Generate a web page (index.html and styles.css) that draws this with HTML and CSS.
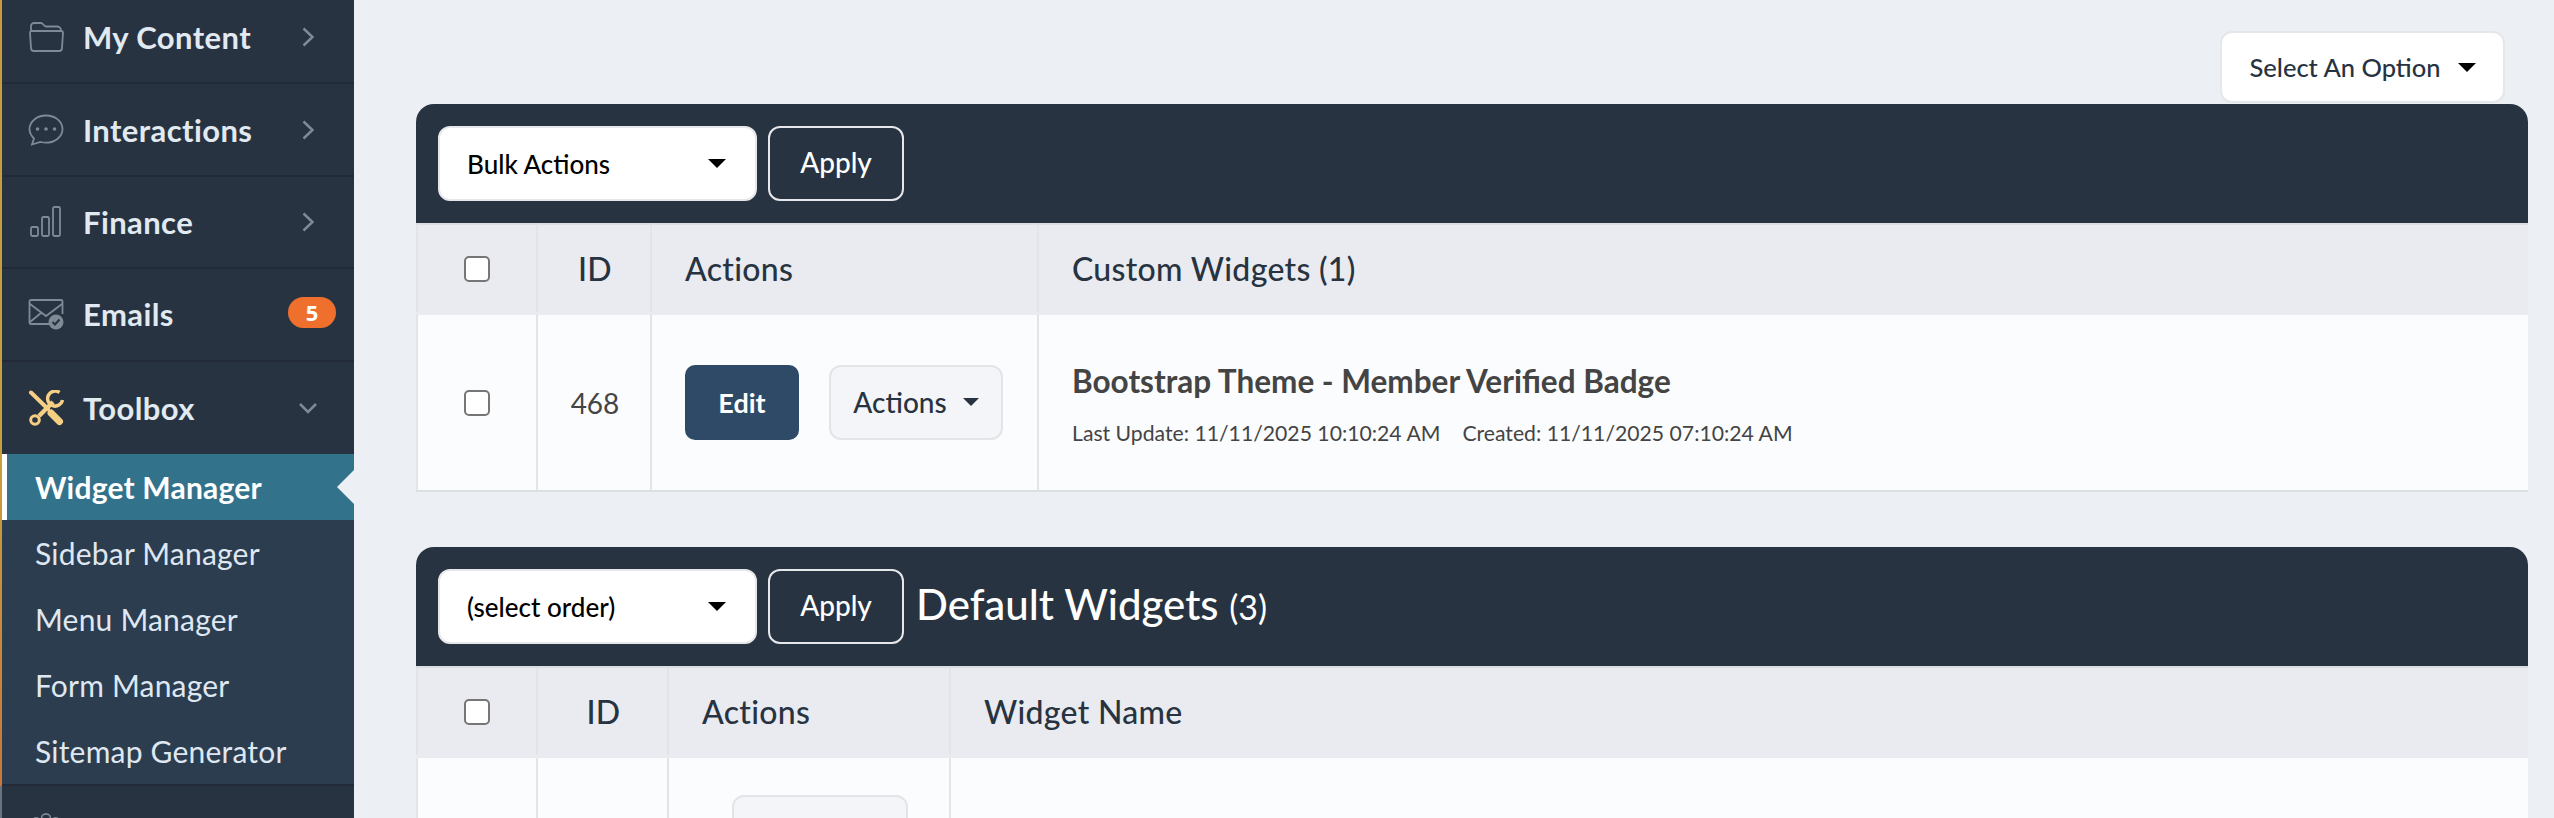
FILE: index.html
```html
<!DOCTYPE html>
<html lang="en">
<head>
<meta charset="utf-8">
<title>Widget Manager</title>
<link rel="stylesheet" href="styles.css">
</head>
<body>
<div class="page">
  <aside class="sidebar">
    <nav class="nav">
      <a class="nav-item">
        <svg class="nav-icon" viewBox="0 0 36 32"><path d="M3 10V5a3 3 0 0 1 3-3h7c2 0 3 3.500 5 3.500h11a4 4 0 0 1 4 4M3 10h30a2 2 0 0 1 2 2l-1 15a3 3 0 0 1-3 3H6a3 3 0 0 1-3-3L2 12a2 2 0 0 1 1-2z"/></svg>
        <span class="nav-label">My Content</span>
        <svg class="chev" viewBox="0 0 12 20"><path d="M1.500 1.500L10.500 10l-9 8.500"/></svg>
      </a>
      <a class="nav-item">
        <svg class="nav-icon" viewBox="0 0 36 32"><path d="M18 1.500C9 1.500 1.500 7.500 1.500 15c0 4 2 7 4.500 9.500L4 30.500l8.500-2.500c2 .5 3.500 .7 5.500 .7 9 0 16.500-6 16.500-13.700S27 1.500 18 1.500z"/><circle class="dot" cx="9.500" cy="15" r="1.800"/><circle class="dot" cx="18" cy="15" r="1.800"/><circle class="dot" cx="26.500" cy="15" r="1.800"/></svg>
        <span class="nav-label">Interactions</span>
        <svg class="chev" viewBox="0 0 12 20"><path d="M1.500 1.500L10.500 10l-9 8.500"/></svg>
      </a>
      <a class="nav-item">
        <svg class="nav-icon" viewBox="0 0 36 32"><rect x="3" y="21" width="7" height="9" rx="1.500"/><rect x="14" y="11" width="7" height="19" rx="1.500"/><rect x="25" y="1" width="7" height="29" rx="1.500"/></svg>
        <span class="nav-label">Finance</span>
        <svg class="chev" viewBox="0 0 12 20"><path d="M1.500 1.500L10.500 10l-9 8.500"/></svg>
      </a>
      <a class="nav-item">
        <svg class="nav-icon" viewBox="0 0 36 32"><path d="M24 26H3a1.500 1.500 0 0 1-1.500-1.500v-21A1.500 1.500 0 0 1 3 2h30a1.500 1.500 0 0 1 1.500 1.500V16M2 6l16 12L34 6M2 24l11-9"/><circle class="dot" cx="28" cy="24" r="7.500"/><path class="check" d="M24.500 24l2.500 2.500 4.500-5"/></svg>
        <span class="nav-label">Emails</span>
        <span class="badge">5</span>
      </a>
      <a class="nav-item open">
        <svg class="nav-icon tool" viewBox="0 0 36 36"><path class="driver" d="M3 2.500L20 19"/><path class="handle" d="M23 23l8.500 8.500"/><path class="wrench" d="M11 26L25 12"/><circle class="ring" cx="7" cy="30" r="4.300"/><path class="jaw" d="M31.500 2.500A7.500 7.500 0 1 0 34.500 10"/></svg>
        <span class="nav-label">Toolbox</span>
        <svg class="chev-down" viewBox="0 0 18 12"><path d="M1 2l8 8 8-8"/></svg>
      </a>
    </nav>
    <ul class="subnav">
      <li class="sub-item active">Widget Manager</li>
      <li class="sub-item">Sidebar Manager</li>
      <li class="sub-item">Menu Manager</li>
      <li class="sub-item">Form Manager</li>
      <li class="sub-item">Sitemap Generator</li>
    </ul>
    <div class="nav-rest">
      <svg class="nav-icon rest-icon" viewBox="0 0 36 36"><circle cx="18" cy="6" r="5"/><circle cx="7" cy="9" r="3.500"/><circle cx="29" cy="9" r="3.500"/></svg>
    </div>
  </aside>
  <main class="main">
    <div class="topbar">
      <button class="option-btn">Select An Option<span class="caret caret-lg"></span></button>
    </div>
    <section class="panel">
      <header class="panel-head">
        <div class="select">Bulk Actions<span class="caret"></span></div>
        <button class="apply">Apply</button>
      </header>
      <div class="thead row-custom">
        <div class="cell check-cell"><span class="checkbox"></span></div>
        <div class="cell id-cell">ID</div>
        <div class="cell">Actions</div>
        <div class="cell">Custom Widgets (1)</div>
      </div>
      <div class="tbody row-custom">
        <div class="cell check-cell"><span class="checkbox"></span></div>
        <div class="cell id-cell">468</div>
        <div class="cell action-cell">
          <button class="edit-btn">Edit</button>
          <button class="actions-btn">Actions<span class="caret caret-sm"></span></button>
        </div>
        <div class="cell name-cell">
          <div class="widget-title">Bootstrap Theme - Member Verified Badge</div>
          <div class="widget-meta"><span>Last Update: 11/11/2025 10:10:24 AM</span><span>Created: 11/11/2025 07:10:24 AM</span></div>
        </div>
      </div>
    </section>
    <section class="panel panel-second">
      <header class="panel-head">
        <div class="select">(select order)<span class="caret"></span></div>
        <button class="apply">Apply</button>
        <h2 class="panel-title">Default Widgets <small>(3)</small></h2>
      </header>
      <div class="thead row-default">
        <div class="cell check-cell"><span class="checkbox"></span></div>
        <div class="cell id-cell">ID</div>
        <div class="cell">Actions</div>
        <div class="cell">Widget Name</div>
      </div>
      <div class="tbody row-default row-cut">
        <div class="cell check-cell"></div>
        <div class="cell id-cell"></div>
        <div class="cell action-cell"><button class="actions-btn cut-btn"></button></div>
        <div class="cell"></div>
      </div>
    </section>
  </main>
</div>
</body>
</html>
```
FILE: styles.css
```css
* { box-sizing: border-box; }
html, body { margin: 0; height: 100%; overflow: hidden; }
body { font-family: "Lato", "Noto Sans", sans-serif; background: #eceff4; color: #283341; }
.page { display: flex; height: 818px; overflow: hidden; }

.sidebar { width: 354px; flex: none; background: #283341; border-left: 2px solid; border-image: linear-gradient(180deg, #c89a3c 0%, #c8a03c 55%, #c87838 96%, #6b7280 96%) 1; display: flex; flex-direction: column; overflow: hidden; }
.nav { margin-top: -8px; }
.nav-item { display: flex; align-items: center; height: 92.400px; padding: 0 20px 0 26px; border-bottom: 2px solid #212a36; color: #e1e9f1; }
.nav-item.open { border-bottom: 0; }
.nav-icon { width: 36px; height: 32px; flex: none; fill: none; stroke: #7f8a97; stroke-width: 1.800; }
.nav-icon .dot { fill: #7f8a97; stroke: none; }
.nav-icon .check { stroke: #283341; stroke-width: 2; }
.nav-icon.tool { stroke: #f6cf85; height: 36px; }
.tool .driver { stroke-width: 4; stroke-linecap: round; }
.tool .handle { stroke-width: 7; stroke-linecap: round; }
.tool .wrench { stroke-width: 4.500; }
.tool .ring { stroke-width: 3; }
.tool .jaw { stroke-width: 3.500; }
.nav-label { margin-left: 19px; font-size: 31px; font-weight: 700; flex: 1; letter-spacing: .4px; }
.chev { width: 12px; height: 20px; margin-right: 20px; fill: none; stroke: #7f8a97; stroke-width: 2.500; }
.chev-down { width: 18px; height: 12px; margin-right: 17px; fill: none; stroke: #7f8a97; stroke-width: 2.500; }
.badge { width: 48px; height: 31px; border-radius: 16px; background: #ee702c; color: #fff; font: 700 22px "Open Sans", sans-serif; display: flex; align-items: center; justify-content: center; margin: -4px -2px 0 0; }
.subnav { list-style: none; margin: 0; padding: 0; background: #2c3d50; }
.sub-item { position: relative; height: 66px; display: flex; align-items: center; padding-left: 33px; font-size: 30px; letter-spacing: .2px; color: #dfe7f0; }
.sub-item.active { background: #33728b; color: #fff; font-weight: 700; border-left: 5px solid #fff; padding-left: 28px; }
.sub-item.active::after { content: ""; position: absolute; right: 0; top: 50%; margin-top: -17px; border: 17px solid transparent; border-right-color: #eceff4; border-left-width: 0; }
.nav-rest { flex: 1; border-top: 2px solid #212a36; padding: 27px 0 0 26px; }
.rest-icon { display: block; }

.main { flex: 1; min-width: 0; padding: 0 26px 0 62px; }
.topbar { display: flex; justify-content: flex-end; height: 104px; padding: 31px 23px 0 0; }
.option-btn { width: 285px; height: 72px; background: #fff; border: 2px solid #e6e7ea; border-radius: 12px; font: 500 25.500px "Lato", sans-serif; color: #283341; display: flex; align-items: center; justify-content: center; padding: 0; }
.caret { display: inline-block; width: 0; height: 0; border: 9px solid transparent; border-top: 9px solid #000; border-bottom: 0; }
.caret-lg { margin-left: 17px; }
.caret-sm { border-width: 8px 8px 0; border-top-color: #283341; margin-left: 16px; }
.panel { border-radius: 18px 18px 0 0; overflow: hidden; box-shadow: 0 2px 0 #dcdee2; }
.panel-second { margin-top: 57px; }
.panel-head { display: flex; align-items: center; height: 119px; padding: 0 22px; background: #283341; }
.select { width: 319px; height: 75px; background: #fff; border: 2px solid #e6e7ea; border-radius: 12px; color: #000; display: flex; align-items: center; justify-content: space-between; padding: 0 29px 0 27px; font-size: 26px; font-weight: 500; }
.apply { width: 136px; height: 75px; margin-left: 11px; background: transparent; border: 2px solid #e6e7ea; border-radius: 12px; color: #fff; font: 500 28px "Lato", sans-serif; padding: 0 0 3px; }
.panel-title { margin: 0 0 6px 12px; font-size: 42px; font-weight: 500; color: #fff; }
.panel-title small { font-size: 34px; font-weight: 400; }
.row-custom { display: grid; grid-template-columns: 120px 114px 387px 1fr; }
.row-default { display: grid; grid-template-columns: 120px 131px 282px 1fr; }
.thead { height: 92px; padding-bottom: 3px; background: #e9ebf0; border-top: 2px solid #dcdee2; font-size: 32px; letter-spacing: .3px; font-weight: 500; color: #283341; }
.tbody { height: 175px; background: #fbfcfd; color: #444; font-size: 28px; }
.row-cut { height: 60px; }
.cell { display: flex; align-items: center; padding: 0 33px; border-left: 2px solid #e2e4e8; min-width: 0; }
.check-cell { padding: 0; justify-content: center; }
.id-cell { padding: 0 0 0 2px; justify-content: center; }
.checkbox { width: 26px; height: 26px; background: #fff; border: 2px solid #767676; border-radius: 5px; }
.action-cell { gap: 30px; align-items: flex-start; padding-top: 50px; }
.edit-btn { width: 114px; height: 75px; background: #2f4a66; color: #fff; border: 0; border-radius: 10px; font: 700 27px "Lato", sans-serif; padding: 0; }
.actions-btn { width: 174px; height: 75px; background: #f4f5f8; color: #283341; border: 2px solid #e3e4e7; border-radius: 12px; font: 500 28px "Lato", sans-serif; padding: 0 0 2px; display: flex; align-items: center; justify-content: center; }
.cut-btn { width: 176px; margin-left: 30px; }
.row-cut .action-cell { padding-top: 37px; gap: 0; overflow: hidden; }
.name-cell { flex-direction: column; align-items: flex-start; justify-content: center; padding-top: 2px; }
.widget-title { font-size: 31.500px; font-weight: 700; color: #444; }
.widget-meta { margin-top: 20px; font-size: 21.200px; color: #444; display: flex; gap: 22px; }
```
